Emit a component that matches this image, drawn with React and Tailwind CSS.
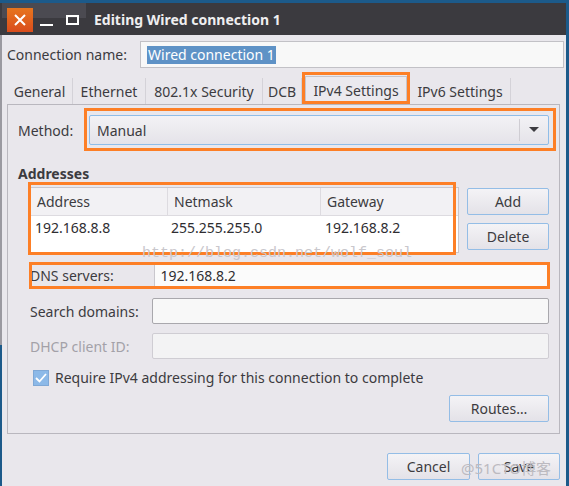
import React from 'react';

const font = { fontFamily: '"Noto Sans", "DejaVu Sans", sans-serif' };

function Btn({ children, className = '' }) {
  return (
    <div className={`flex items-center justify-center border border-[#94bde6] rounded-[2px] bg-gradient-to-b from-[#f4f3f6] to-[#e4e2e8] text-[14px] text-[#3c3b40] ${className}`}>
      {children}
    </div>
  );
}

function Field({ className = '', children }) {
  return <div className={`h-[26px] border rounded-[2px] flex items-center px-[6px] text-[14px] ${className}`}>{children}</div>;
}

export default function App() {
  const tabs = [
    { name: 'General', w: 66 },
    { name: 'Ethernet', w: 73 },
    { name: '802.1x Security', w: 117 },
    { name: 'DCB', w: 39 },
    { name: 'IPv4 Settings', w: 102, active: true },
    { name: 'IPv6 Settings', w: 101 },
  ];

  return (
    <div className="w-[569px] h-[486px] bg-[#1c5a8a] overflow-hidden relative" style={font}>
      <div className="pt-[3px] flex">
        <div className="w-[2px] flex flex-col">
          <div className="h-[32px] bg-[#3b3a3f]" />
          <div className="h-[310px] bg-[#9a99a0]" />
        </div>
        <div className="w-[564px] flex flex-col">
          {/* title bar */}
          <div className="h-[32px] bg-[#3b3a3f] flex items-center relative">
            <div className="absolute left-0 top-0 w-[84px] h-[15px] bg-[#4b4a51]" />
            <div className="relative ml-[5px] mt-[2px] w-[26px] h-[24px] bg-gradient-to-b from-[#e7751e] to-[#d94c1c] flex items-center justify-center">
              <svg width="12" height="12" viewBox="0 0 12 12">
                <path d="M1 1 L11 11 M11 1 L1 11" stroke="#fff" strokeWidth="2" />
              </svg>
            </div>
            <div className="relative mt-[2px] w-[26px] h-[24px] flex items-center justify-center">
              <div className="w-[13px] h-[2px] bg-white mt-[10px]" />
            </div>
            <div className="relative mt-[2px] w-[26px] h-[24px] flex items-center justify-center">
              <div className="w-[13px] h-[10px] border-2 border-white" />
            </div>
            <div className="relative ml-[9px] text-[14px] font-bold text-[#efeef0]">Editing Wired connection 1</div>
          </div>

          {/* body */}
          <div className="h-[451px] bg-[#e9e7ec] flex flex-col text-[#3c3b40]">
            <div className="flex items-center mt-[6px] h-[27px]">
              <div className="ml-[5px] text-[14px]">Connection name:</div>
              <div className="ml-auto w-[424px] h-[27px] border border-[#c2c1c6] bg-[#f8f8f8] flex items-center pl-[6px] mr-[2px]">
                <span className="bg-[#5e92c6] text-white text-[14px] leading-[18px] px-[1px]">Wired connection 1</span>
              </div>
            </div>

            {/* tabs */}
            <div className="flex mt-[8px] ml-[5px] h-[28px] items-end">
              {tabs.map((t) => (
                <div
                  key={t.name}
                  style={{ width: t.w }}
                  className={
                    t.active
                      ? 'h-[28px] mx-[3px] border border-b-0 border-[#c6c4ca] bg-[#ebe9ee] flex items-center justify-center text-[14px]'
                      : 'h-[26px] border-r border-[#d4d2d8] flex items-center justify-center text-[14px] text-[#3c3b40]'
                  }
                >
                  {t.name}
                </div>
              ))}
            </div>

            {/* panel */}
            <div className="ml-[5px] w-[553px] h-[330px] border border-[#b9b7be] flex flex-col">
              <div className="flex items-center mt-[10px] h-[30px]">
                <div className="ml-[10px] text-[14px]">Method:</div>
                <div className="ml-auto mr-[10px] w-[460px] h-[30px] border border-[#8fbde8] rounded-[2px] bg-gradient-to-b from-[#f3f2f5] to-[#e5e3e9] flex items-center">
                  <div className="ml-[7px] text-[14px]">Manual</div>
                  <div className="ml-auto w-px h-[22px] bg-[#cfcdd3]" />
                  <svg className="mx-[9px]" width="10" height="6" viewBox="0 0 10 6">
                    <path d="M0 0 L10 0 L5 5 Z" fill="#3c3b40" />
                  </svg>
                </div>
              </div>

              <div className="ml-[10px] mt-[18px] text-[14px] font-bold">Addresses</div>

              <div className="flex mt-[3px]">
                <div className="ml-[22px] w-[429px] h-[66px] border border-[#c9c7cd] bg-white flex flex-col">
                  <div className="h-[28px] bg-[#f2f1f4] border-b border-[#dddbe0] flex text-[14px]">
                    <div className="w-[137px] border-r border-[#dddbe0] flex items-center pl-[6px]">Address</div>
                    <div className="w-[153px] border-r border-[#dddbe0] flex items-center pl-[6px]">Netmask</div>
                    <div className="flex-1 flex items-center pl-[6px]">Gateway</div>
                  </div>
                  <div className="h-[22px] flex text-[14px] text-[#2e2d31]">
                    <div className="w-[137px] flex items-center pl-[4px]">192.168.8.8</div>
                    <div className="w-[153px] flex items-center pl-[3px]">255.255.255.0</div>
                    <div className="flex-1 flex items-center pl-[4px]">192.168.8.2</div>
                  </div>
                </div>
                <div className="ml-auto mr-[10px] flex flex-col gap-[8px] mt-[1px]">
                  <Btn className="w-[82px] h-[27px]">Add</Btn>
                  <Btn className="w-[82px] h-[27px]">Delete</Btn>
                </div>
              </div>

              <div className="flex items-center mt-[9px]">
                <div className="ml-[22px] w-[124px] text-[14px]">DNS servers:</div>
                <Field className="ml-auto mr-[10px] w-[397px] h-[25px] border-[#c9c7cd] bg-[#fbfbfb] text-[#2e2d31]">192.168.8.2</Field>
              </div>
              <div className="flex items-center mt-[10px]">
                <div className="ml-[22px] text-[14px]">Search domains:</div>
                <Field className="ml-auto mr-[10px] w-[397px] border-[#a9a8ad] bg-[#f8f8f8]" />
              </div>
              <div className="flex items-center mt-[9px]">
                <div className="ml-[22px] text-[14px] text-[#a3a1a8]">DHCP client ID:</div>
                <Field className="ml-auto mr-[10px] w-[397px] border-[#cfcdd3] bg-[#f3f3f4]" />
              </div>

              <div className="flex items-center mt-[8px] ml-[25px]">
                <div className="w-[16px] h-[16px] border border-[#7fa8d6] bg-[#8cb9e8] flex items-center justify-center">
                  <svg width="12" height="10" viewBox="0 0 12 10">
                    <path d="M1 5 L4.5 8.5 L11 1" stroke="#fff" strokeWidth="1.8" fill="none" />
                  </svg>
                </div>
                <div className="ml-[6px] text-[14px]">Require IPv4 addressing for this connection to complete</div>
              </div>

              <div className="flex mt-[7px]">
                <Btn className="ml-auto mr-[10px] w-[100px] h-[27px]">Routes…</Btn>
              </div>
            </div>

            <div className="flex justify-end mt-[19px] mr-[6px] gap-[8px]">
              <Btn className="w-[83px] h-[27px]">Cancel</Btn>
              <Btn className="w-[82px] h-[27px]">Save</Btn>
            </div>
          </div>
        </div>
      </div>

      {/* annotation boxes */}
      <div className="absolute left-[302px] top-[72px] w-[108px] h-[32px] border-[3px] border-[#fd7f26]" />
      <div className="absolute left-[84px] top-[108px] w-[472px] h-[43px] border-[3px] border-[#fd7f26]" />
      <div className="absolute left-[28px] top-[182px] w-[428px] h-[73px] border-[3px] border-[#fd7f26]" />
      <div className="absolute left-[29px] top-[262px] w-[521px] h-[27px] border-[3px] border-[#fd7f26]" />

      {/* watermarks */}
      <div className="absolute left-[142px] top-[243px] text-[15px] text-[#c9c7cc]" style={{ fontFamily: '"Liberation Mono", monospace' }}>
        http://blog.csdn.net/wolf_soul
      </div>
      <div className="absolute left-[461px] top-[457px] text-[15px] text-[#bcbac0]" style={{ fontFamily: '"Noto Sans", "Noto Sans CJK SC", sans-serif' }}>
        @51CTO博客
      </div>
    </div>
  );
}
